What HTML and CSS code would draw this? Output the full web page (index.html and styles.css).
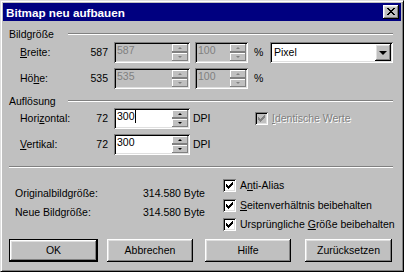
FILE: index.html
```html
<!DOCTYPE html>
<html>
<head>
<meta charset="utf-8">
<link rel="stylesheet" href="styles.css">
</head>
<body>
<div class="win">
  <div class="titlebar">
    <span class="title">Bitmap neu aufbauen</span>
    <span class="close raised"><svg width="8" height="7" viewBox="0 0 8 7" shape-rendering="crispEdges"><path d="M0 0h2v1H0zM6 0h2v1H6zM1 1h2v1H1zM5 1h2v1H5zM2 2h4v1H2zM3 3h2v1H3zM2 4h4v1H2zM1 5h2v1H1zM5 5h2v1H5zM0 6h2v1H0zM6 6h2v1H6z" fill="#000"/></svg></span>
  </div>

  <div class="ghead"><span class="gtitle">Bildgröße</span><span class="etch"></span></div>

  <div class="row row-a">
    <span class="lbl"><u>B</u>reite:</span><span class="num">587</span>
    <div class="spin dis w-main"><span class="val">587</span><span class="btns"><span class="sb"><i class="up"></i></span><span class="sb"><i class="dn"></i></span></span></div>
    <div class="spin dis w-pct"><span class="val">100</span><span class="btns"><span class="sb"><i class="up"></i></span><span class="sb"><i class="dn"></i></span></span></div>
    <span class="unit">%</span>
    <div class="combo"><span class="val">Pixel</span><span class="dd raised"><i class="ddarrow"></i></span></div>
  </div>

  <div class="row row-b">
    <span class="lbl">Hö<u>h</u>e:</span><span class="num">535</span>
    <div class="spin dis w-main"><span class="val">535</span><span class="btns"><span class="sb"><i class="up"></i></span><span class="sb"><i class="dn"></i></span></span></div>
    <div class="spin dis w-pct"><span class="val">100</span><span class="btns"><span class="sb"><i class="up"></i></span><span class="sb"><i class="dn"></i></span></span></div>
    <span class="unit">%</span>
  </div>

  <div class="ghead ghead-b"><span class="gtitle">Auflösung</span><span class="etch"></span></div>

  <div class="row row-c">
    <span class="lbl">Hori<u>z</u>ontal:</span><span class="num">72</span>
    <div class="spin w-main"><span class="val">300<span class="caret"></span></span><span class="btns"><span class="sb"><i class="up"></i></span><span class="sb"><i class="dn"></i></span></span></div>
    <span class="dpi">DPI</span>
    <span class="cb cb-dis"><span class="box"><svg width="7" height="7" viewBox="0 0 7 7" shape-rendering="crispEdges"><path d="M6 0h1v1H6zM5 1h2v1H5zM0 2h1v1H0zM4 2h3v1H4zM0 3h2v1H0zM3 3h3v1H3zM0 4h5v1H0zM1 5h3v1H1zM2 6h1v1H2z" fill="#808080"/></svg></span><span class="cbl"><u>I</u>dentische Werte</span></span>
  </div>

  <div class="row row-d">
    <span class="lbl"><u>V</u>ertikal:</span><span class="num">72</span>
    <div class="spin w-main"><span class="val">300</span><span class="btns"><span class="sb"><i class="up"></i></span><span class="sb"><i class="dn"></i></span></span></div>
    <span class="dpi">DPI</span>
  </div>

  <div class="sep"></div>

  <div class="bottom">
    <div class="info">
      <div class="irow"><span class="ilbl">Originalbildgröße:</span><span>314.580 Byte</span></div>
      <div class="irow"><span class="ilbl">Neue Bildgröße:</span><span>314.580 Byte</span></div>
    </div>
    <div class="checks">
      <span class="cb"><span class="box"><svg width="7" height="7" viewBox="0 0 7 7" shape-rendering="crispEdges"><path d="M6 0h1v1H6zM5 1h2v1H5zM0 2h1v1H0zM4 2h3v1H4zM0 3h2v1H0zM3 3h3v1H3zM0 4h5v1H0zM1 5h3v1H1zM2 6h1v1H2z" fill="#000"/></svg></span><span class="cbl">A<u>n</u>ti-Alias</span></span>
      <span class="cb"><span class="box"><svg width="7" height="7" viewBox="0 0 7 7" shape-rendering="crispEdges"><path d="M6 0h1v1H6zM5 1h2v1H5zM0 2h1v1H0zM4 2h3v1H4zM0 3h2v1H0zM3 3h3v1H3zM0 4h5v1H0zM1 5h3v1H1zM2 6h1v1H2z" fill="#000"/></svg></span><span class="cbl"><u>S</u>eitenverhältnis beibehalten</span></span>
      <span class="cb"><span class="box"><svg width="7" height="7" viewBox="0 0 7 7" shape-rendering="crispEdges"><path d="M6 0h1v1H6zM5 1h2v1H5zM0 2h1v1H0zM4 2h3v1H4zM0 3h2v1H0zM3 3h3v1H3zM0 4h5v1H0zM1 5h3v1H1zM2 6h1v1H2z" fill="#000"/></svg></span><span class="cbl">Ursprüngliche <u>G</u>röße beibehalten</span></span>
    </div>
  </div>

  <div class="btnrow">
    <span class="btn btn-def">OK</span>
    <span class="btn btn-2 raised">Abbrechen</span>
    <span class="btn btn-3 raised">Hilfe</span>
    <span class="btn btn-4 raised">Zurücksetzen</span>
  </div>
</div>
</body>
</html>
```

FILE: styles.css
```css
html, body {
  margin: 0;
  padding: 0;
}
body {
  width: 404px;
  height: 272px;
  overflow: hidden;
  background: #c0c0c0;
  font-family: "Liberation Sans", Arial, sans-serif;
  font-size: 10.5px;
  line-height: 13px;
  color: #000;
}
u { text-decoration: underline; text-underline-offset: 1px; }

.win {
  box-sizing: border-box;
  width: 404px;
  height: 272px;
  padding: 2px;
  background: #c0c0c0;
  border: 1px solid;
  border-color: #dfdfdf #000 #000 #dfdfdf;
  box-shadow: inset 1px 1px #fff, inset -1px -1px #808080;
}

.raised {
  background: #c0c0c0;
  box-shadow: inset -1px -1px #000, inset 1px 1px #fff, inset -2px -2px #808080, inset 2px 2px #dfdfdf;
}

.titlebar {
  height: 18px;
  background: #000080;
  display: flex;
  align-items: center;
  padding: 0 2px 0 3px;
}
.title {
  flex: 1;
  color: #fff;
  font-weight: bold;
  font-size: 11.7px;
}
.close {
  box-sizing: border-box;
  width: 16px;
  height: 14px;
  display: flex;
  align-items: center;
  justify-content: center;
  padding: 0 0 1px 0;
}
.close svg { display: block; margin-left: 0; }

.ghead {
  display: flex;
  align-items: center;
  height: 14px;
  margin: 6px 8px 0 6px;
}
.ghead-b { margin-top: 5px; }
.gtitle { width: 59px; }
.etch {
  flex: 1;
  height: 0;
  border-top: 1px solid #808080;
  border-bottom: 1px solid #fff;
}

.row {
  display: flex;
  align-items: center;
  height: 21px;
  padding-left: 17px;
}
.row-a { margin-top: 1px; }
.row-b { margin-top: 5px; }
.row-c { margin-top: 0; }
.row-d { margin-top: 5px; }

.lbl { width: 60px; }
.num { width: 28px; text-align: right; }

.spin {
  box-sizing: border-box;
  height: 21px;
  display: flex;
  padding: 2px;
  margin-left: 6px;
  background: #fff;
  box-shadow: inset 1px 1px #808080, inset -1px -1px #fff, inset 2px 2px #000, inset -2px -2px #dfdfdf;
}
.spin .val { flex: 1; padding-left: 1px; }
.spin.dis { background: #c0c0c0; color: #808080; }
.w-main { width: 76px; }
.w-pct { width: 53px; margin-left: 5px; }

.caret {
  display: inline-block;
  width: 1px;
  height: 13px;
  background: #000;
  vertical-align: top;
}

.btns {
  width: 16px;
  display: flex;
  flex-direction: column;
}
.sb {
  box-sizing: border-box;
  height: 8px;
  display: flex;
  align-items: center;
  justify-content: center;
  background: #c0c0c0;
  box-shadow: inset -1px -1px #808080, inset 1px 1px #fff;
}
.sb + .sb { height: 9px; border-top: 1px solid #808080; }
.up, .dn {
  display: block;
  width: 0;
  height: 0;
  border-left: 2px solid transparent;
  border-right: 2px solid transparent;
}
.up { border-bottom: 2px solid #000; }
.dn { border-top: 2px solid #000; }
.dis .up { border-bottom-color: #808080; }
.dis .dn { border-top-color: #808080; }

.unit { margin-left: 6px; width: 16px; }

.combo {
  box-sizing: border-box;
  width: 123px;
  height: 21px;
  display: flex;
  align-items: center;
  padding: 2px;
  background: #fff;
  box-shadow: inset 1px 1px #808080, inset -1px -1px #fff, inset 2px 2px #000, inset -2px -2px #dfdfdf;
}
.combo .val { flex: 1; padding-left: 2px; }
.dd {
  width: 16px;
  height: 17px;
  display: flex;
  align-items: center;
  justify-content: center;
}
.ddarrow {
  display: block;
  width: 0;
  height: 0;
  border-left: 4px solid transparent;
  border-right: 4px solid transparent;
  border-top: 4px solid #000;
}

.dpi { margin-left: 3px; width: 62px; }

.cb {
  display: flex;
  align-items: center;
  height: 13px;
}
.box {
  box-sizing: border-box;
  width: 13px;
  height: 13px;
  display: flex;
  align-items: center;
  justify-content: center;
  background: #fff;
  box-shadow: inset 1px 1px #808080, inset -1px -1px #fff, inset 2px 2px #000, inset -2px -2px #dfdfdf;
}
.box svg { display: block; }
.cbl { margin-left: 4px; white-space: nowrap; }
.cb-dis .box { background: #c0c0c0; }
.cb-dis .cbl { color: #808080; text-shadow: 1px 1px 0 #fff; }

.sep {
  height: 0;
  border-top: 1px solid #808080;
  border-bottom: 1px solid #fff;
  margin: 11px 8px 0 6px;
}

.bottom {
  display: flex;
  height: 71px;
}
.info {
  width: 208px;
  padding: 16px 0 0 12px;
}
.irow {
  display: flex;
  align-items: center;
  height: 19px;
}
.ilbl { width: 128px; }
.checks {
  display: flex;
  flex-direction: column;
  padding-top: 11px;
}
.checks .cb + .cb { margin-top: 6px; }
.checks .cb:nth-child(2) { margin-top: 7px; }

.btnrow {
  display: flex;
  height: 23px;
  padding-left: 6px;
}
.btn {
  box-sizing: border-box;
  height: 23px;
  display: flex;
  align-items: center;
  justify-content: center;
  width: 86px;
}
.btn-def {
  width: 89px;
  border: 1px solid #000;
  background: #c0c0c0;
  box-shadow: inset -1px -1px #000, inset 1px 1px #fff, inset -2px -2px #808080, inset 2px 2px #dfdfdf;
}
.btn-2 { margin-left: 9px; }
.btn-3 { margin-left: 12px; }
.btn-4 { margin-left: 14px; width: 87px; }
```
